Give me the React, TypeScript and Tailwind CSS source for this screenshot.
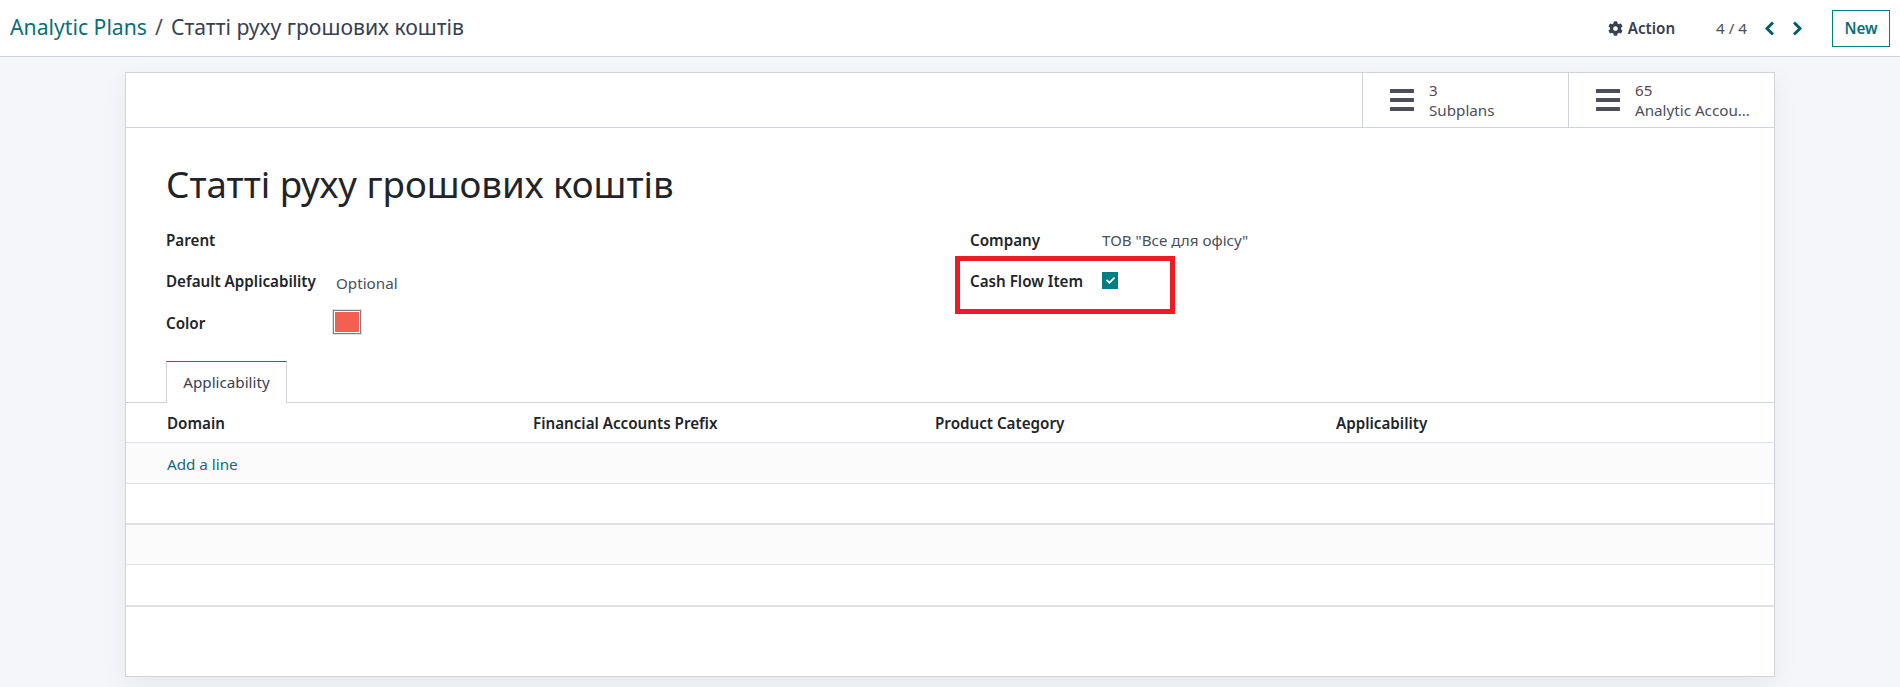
import { FaCog, FaChevronLeft, FaChevronRight, FaCheck } from "react-icons/fa";

function Menu() {
  return (
    <svg width="24" height="22" viewBox="0 0 24 22" className="shrink-0">
      <rect x="0" y="0" width="24" height="4" rx="0.5" fill="#4a4f59" />
      <rect x="0" y="9" width="24" height="4" rx="0.5" fill="#4a4f59" />
      <rect x="0" y="18" width="24" height="4" rx="0.5" fill="#4a4f59" />
    </svg>
  );
}

function Stat({ n, label }: { n: string; label: string }) {
  return (
    <div className="w-[206px] h-full border-l border-[#d0d3dc] flex items-center pl-[27px] gap-[15px]">
      <Menu />
      <div className="flex flex-col text-[15.2px] leading-[20px] text-[#4a4f59] w-[120px]">
        <span className="text-[#5f4459]">{n}</span>
        <span className="truncate">{label}</span>
      </div>
    </div>
  );
}

export default function App() {
  return (
    <div className="h-[687px] overflow-hidden bg-[#f5f6fa] text-[15.2px] text-[#212529] font-['Noto_Sans','Open_Sans',sans-serif]">
      <header className="h-[57px] bg-white border-b border-[#d0d3dc] flex items-center pl-[10px] pr-[10px]">
        <div className="flex items-center text-[21.2px] mb-[2px]">
          <span className="text-[#0a6f75]">Analytic Plans</span>
          <span className="text-[#4a4f59] mx-[8px]">/</span>
          <span className="text-[#374151]">Статті руху грошових коштів</span>
        </div>
        <div className="ml-auto flex items-center">
          <FaCog size={15} className="text-[#374151]" />
          <span className="ml-[5px] font-semibold text-[#374151]">Action</span>
          <span className="ml-[41px] text-[#4a4f59]">4 / 4</span>
          <FaChevronLeft size={15} strokeWidth={30} className="ml-[15px] text-[#005e63]" />
          <FaChevronRight size={15} strokeWidth={30} className="ml-[13px] text-[#005e63]" />
          <button className="ml-[27px] w-[58px] h-[37px] border border-[#017e84] text-[#0a6f75] font-semibold">New</button>
        </div>
      </header>
      <main className="pt-[15px]">
        <div className="relative mx-auto w-[1650px] h-[605px] bg-white border border-[#d0d3dc] shadow-[0_8px_24px_rgba(0,0,0,0.06)]">
          <div className="h-[55px] border-b border-[#d0d3dc] flex justify-end">
            <Stat n="3" label="Subplans" />
            <Stat n="65" label="Analytic Accounts" />
          </div>
          <div className="pl-[40px] pt-[29px]">
            <h1 className="text-[36.7px] leading-[54px] text-[#212529]">Статті руху грошових коштів</h1>
            <div className="flex mt-[17px]">
              <div className="w-[804px] flex flex-col">
                <div className="h-[41px] font-semibold leading-[24px]">Parent</div>
                <div className="h-[42px] flex">
                  <span className="w-[170px] font-semibold leading-[24px] whitespace-nowrap">Default Applicability</span>
                  <span className="text-[#4a4f59] mt-[2px] leading-[24px]">Optional</span>
                </div>
                <div className="h-[51px] flex">
                  <span className="w-[166px] font-semibold leading-[24px]">Color</span>
                  <span className="shrink-0 w-[30px] h-[26px] -mt-[2px] border border-[#dfe1e6]">
                    <span className="block w-full h-full border border-[#7c7f8c] p-[1px]">
                      <span className="block w-full h-full bg-[#f46050]" />
                    </span>
                  </span>
                </div>
              </div>
              <div className="flex flex-col">
                <div className="h-[41px] flex">
                  <span className="w-[132px] font-semibold leading-[24px]">Company</span>
                  <span className="text-[#4a4f59] leading-[24px]">ТОВ "Все для офісу"</span>
                </div>
                <div className="relative h-[42px] flex">
                  <span className="w-[132px] font-semibold leading-[24px]">Cash Flow Item</span>
                  <span className="w-[16px] h-[17px] mt-[3px] bg-[#017e84] flex items-center justify-center">
                    <FaCheck size={9} className="text-white" />
                  </span>
                  <div className="absolute left-[-15px] top-[-13px] w-[220px] h-[58px] border-[5px] border-[#ed1c24]" />
                </div>
              </div>
            </div>
          </div>
          <div className="h-[42px] border-b border-[#d0d3dc] pl-[40px] mt-[-1px] flex">
            <div className="w-[121px] h-[42px] bg-white border-x border-[#d0d3dc] border-t border-t-[#714b67] flex items-center justify-center text-[#374151]">
              Applicability
            </div>
          </div>
          <div className="h-[40px] pt-[2px] border-b border-[#dee2e6] grid grid-cols-[366px_402px_401px_1fr] pl-[41px] items-center font-semibold">
            <span>Domain</span>
            <span>Financial Accounts Prefix</span>
            <span>Product Category</span>
            <span>Applicability</span>
          </div>
          <div className="h-[41px] pt-[2px] bg-[#fbfbfb] border-b border-[#dee2e6] pl-[41px] flex items-center text-[#0a6f75]">Add a line</div>
          <div className="h-[41px] border-b-2 border-[#dfe0e6]" />
          <div className="h-[40px] bg-[#fbfbfb] border-b border-[#dee2e6]" />
          <div className="h-[42px] border-b-2 border-[#dfe0e6]" />
        </div>
      </main>
    </div>
  );
}
